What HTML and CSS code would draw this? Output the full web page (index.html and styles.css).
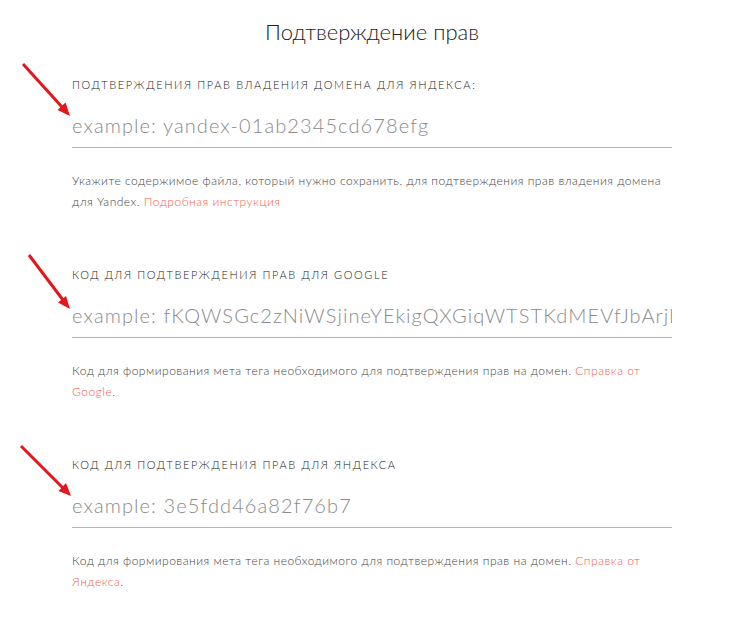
FILE: index.html
```html
<!DOCTYPE html>
<html lang="ru">
<head>
    <meta charset="UTF-8">
    <meta name="viewport" content="width=device-width, initial-scale=1.0">
    <title>Подтверждение прав</title>
    <link rel="stylesheet" href="styles.css">
</head>
<body>

<div class="verify">
    <h1>Подтверждение прав</h1>

    <!-- Яндекс: файл -->
    <div class="field">
        <svg class="pointer" width="60" height="64" viewBox="0 0 60 64">
            <line x1="5" y1="3" x2="44" y2="46" />
            <polygon points="52,55 39.5,49 47.5,41.5" />
        </svg>
        <label for="yandexFile">Подтверждения прав владения домена для Яндекса:</label>
        <input type="text" id="yandexFile" placeholder="example: yandex-01ab2345cd678efg">
        <p class="hint">Укажите содержимое файла, который нужно сохранить, для подтверждения прав владения домена для Yandex. <a href="#">Подробная инструкция</a></p>
    </div>

    <!-- Google: мета тег -->
    <div class="field">
        <svg class="pointer" width="60" height="64" viewBox="0 0 60 64">
            <line x1="11" y1="4" x2="45" y2="49" />
            <polygon points="52,58 40,51.5 48,45" />
        </svg>
        <label for="googleCode">Код для подтверждения прав для Google</label>
        <input type="text" id="googleCode" placeholder="example: fKQWSGc2zNiWSjineYEkigQXGiqWTSTKdMEVfJbArjl">
        <p class="hint">Код для формирования мета тега необходимого для подтверждения прав на домен. <a href="#">Справка от Google</a>.</p>
    </div>

    <!-- Яндекс: мета тег -->
    <div class="field">
        <svg class="pointer" width="60" height="64" viewBox="0 0 60 64">
            <line x1="3" y1="5" x2="45" y2="47" />
            <polygon points="53,55 40.5,50 48,42" />
        </svg>
        <label for="yandexCode">Код для подтверждения прав для Яндекса</label>
        <input type="text" id="yandexCode" placeholder="example: 3e5fdd46a82f76b7">
        <p class="hint">Код для формирования мета тега необходимого для подтверждения прав на домен. <a href="#">Справка от Яндекса</a>.</p>
    </div>
</div>

</body>
</html>
```

FILE: styles.css
```css
/* общие стили */
body {
    margin: 0;
    background: #fff;
    font-family: Lato, "Open Sans", sans-serif;
    font-weight: 300;
    color: #333;
}

.verify {
    width: 600px;
    padding: 17px 0 0 72px;
}

h1 {
    margin: 0 0 30px;
    font-size: 22px;
    line-height: 30px;
    font-weight: 300;
    color: #222;
    text-align: center;
}

.field {
    position: relative;
    margin-bottom: 55px;
}

/* красные стрелки-указатели */
.pointer {
    position: absolute;
    left: -54px;
    top: -16px;
}

.pointer line {
    stroke: #e3161c;
    stroke-width: 3;
}

.pointer polygon {
    fill: #e3161c;
}

label {
    display: block;
    font-size: 11px;
    line-height: 16px;
    letter-spacing: 1.6px;
    text-transform: uppercase;
    color: #222;
    margin-bottom: 9px;
}

input[type="text"] {
    display: block;
    width: 100%;
    height: 46px;
    padding: 0;
    border: none;
    border-bottom: 1px solid #b4b4b4;
    font-family: inherit;
    font-weight: 300;
    font-size: 20px;
    letter-spacing: 1.1px;
    color: #555;
    outline: none;
    box-sizing: border-box;
}

input::placeholder {
    color: #8a8a8a;
}

.hint {
    margin: 22px 0 0;
    font-size: 12px;
    line-height: 21px;
    letter-spacing: 0.5px;
    color: #444;
}

.hint a {
    color: #ee5e52;
    text-decoration: none;
}
```
